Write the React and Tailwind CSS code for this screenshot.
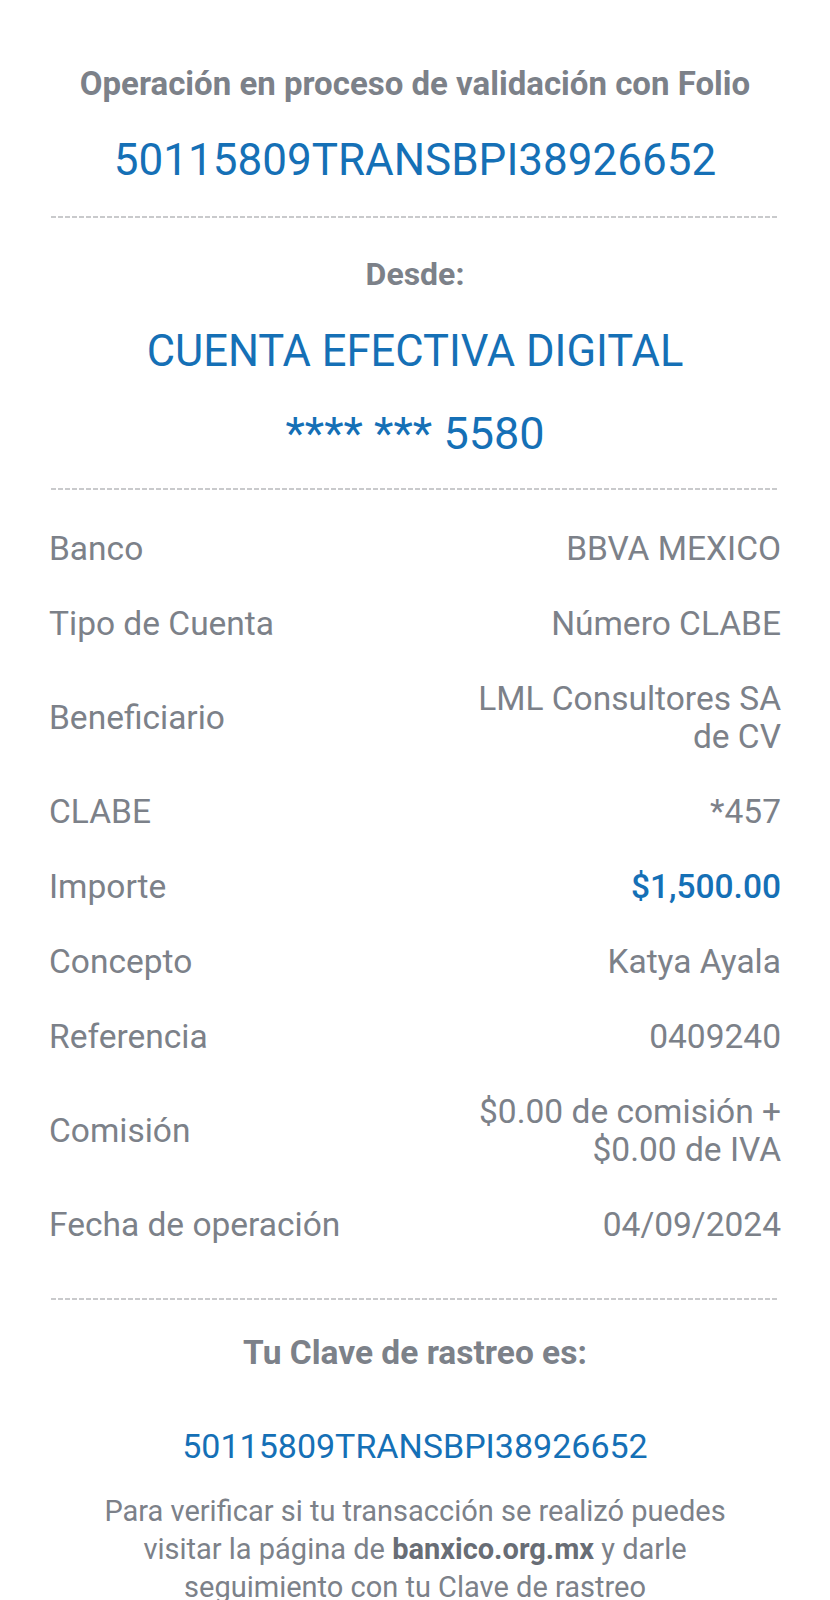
const rows = [
  { label: "Banco", value: ["BBVA MEXICO"] },
  { label: "Tipo de Cuenta", value: ["Número CLABE"] },
  { label: "Beneficiario", value: ["LML Consultores SA", "de CV"] },
  { label: "CLABE", value: ["*457"] },
  { label: "Importe", value: ["$1,500.00"], blue: true },
  { label: "Concepto", value: ["Katya Ayala"] },
  { label: "Referencia", value: ["0409240"] },
  { label: "Comisión", value: ["$0.00 de comisión +", "$0.00 de IVA"] },
  { label: "Fecha de operación", value: ["04/09/2024"] },
];

function Dashes({ className }) {
  return (
    <div
      className={`mx-[2px] h-[2px] bg-[repeating-linear-gradient(90deg,#c9cacc_0_5px,transparent_5px_7px)] ${className}`}
    />
  );
}

export default function App() {
  return (
    <div className="min-h-[1600px] w-full bg-white px-[49px] pt-[64px] font-['Roboto',sans-serif] text-[#7c8189]">
      <p className="text-center text-[33px] font-bold leading-[40px]">
        Operación en proceso de validación con Folio
      </p>
      <p className="mt-[30px] text-center text-[44px] leading-[52px] text-[#1570b6]">
        50115809TRANSBPI38926652
      </p>

      <Dashes className="mt-[30px]" />

      <p className="mt-[36px] text-center text-[32px] font-bold leading-[40px]">Desde:</p>
      <p className="mt-[34px] text-center text-[43.5px] leading-[48px] text-[#1570b6]">
        CUENTA EFECTIVA DIGITAL
      </p>
      <p className="mt-[33px] text-center text-[45px] leading-[50px] text-[#1570b6]">
        **** *** 5580
      </p>

      <Dashes className="mt-[29px]" />

      <div className="mt-[40px] flex flex-col gap-[37px] text-[33.5px] leading-[38px]">
        {rows.map((r) => (
          <div key={r.label} className="flex items-center justify-between">
            <span>{r.label}</span>
            <span
              className={
                r.blue
                  ? "text-right font-medium text-[#1570b6]"
                  : "text-right"
              }
            >
              {r.value.map((v) => (
                <span key={v} className="block">
                  {v}
                </span>
              ))}
            </span>
          </div>
        ))}
      </div>

      <Dashes className="mt-[54px]" />

      <p className="mt-[34px] text-center text-[33.5px] font-bold leading-[38px]">
        Tu Clave de rastreo es:
      </p>
      <p className="mt-[53px] text-center text-[34px] leading-[42px] text-[#1570b6]">
        50115809TRANSBPI38926652
      </p>
      <div className="mt-[25px] flex flex-col items-center text-[29px] leading-[38px]">
        <p>Para verificar si tu transacción se realizó puedes</p>
        <p>
          visitar la página de <b className="font-bold text-[#686d75]">banxico.org.mx</b> y darle
        </p>
        <p>seguimiento con tu Clave de rastreo</p>
      </div>
    </div>
  );
}
